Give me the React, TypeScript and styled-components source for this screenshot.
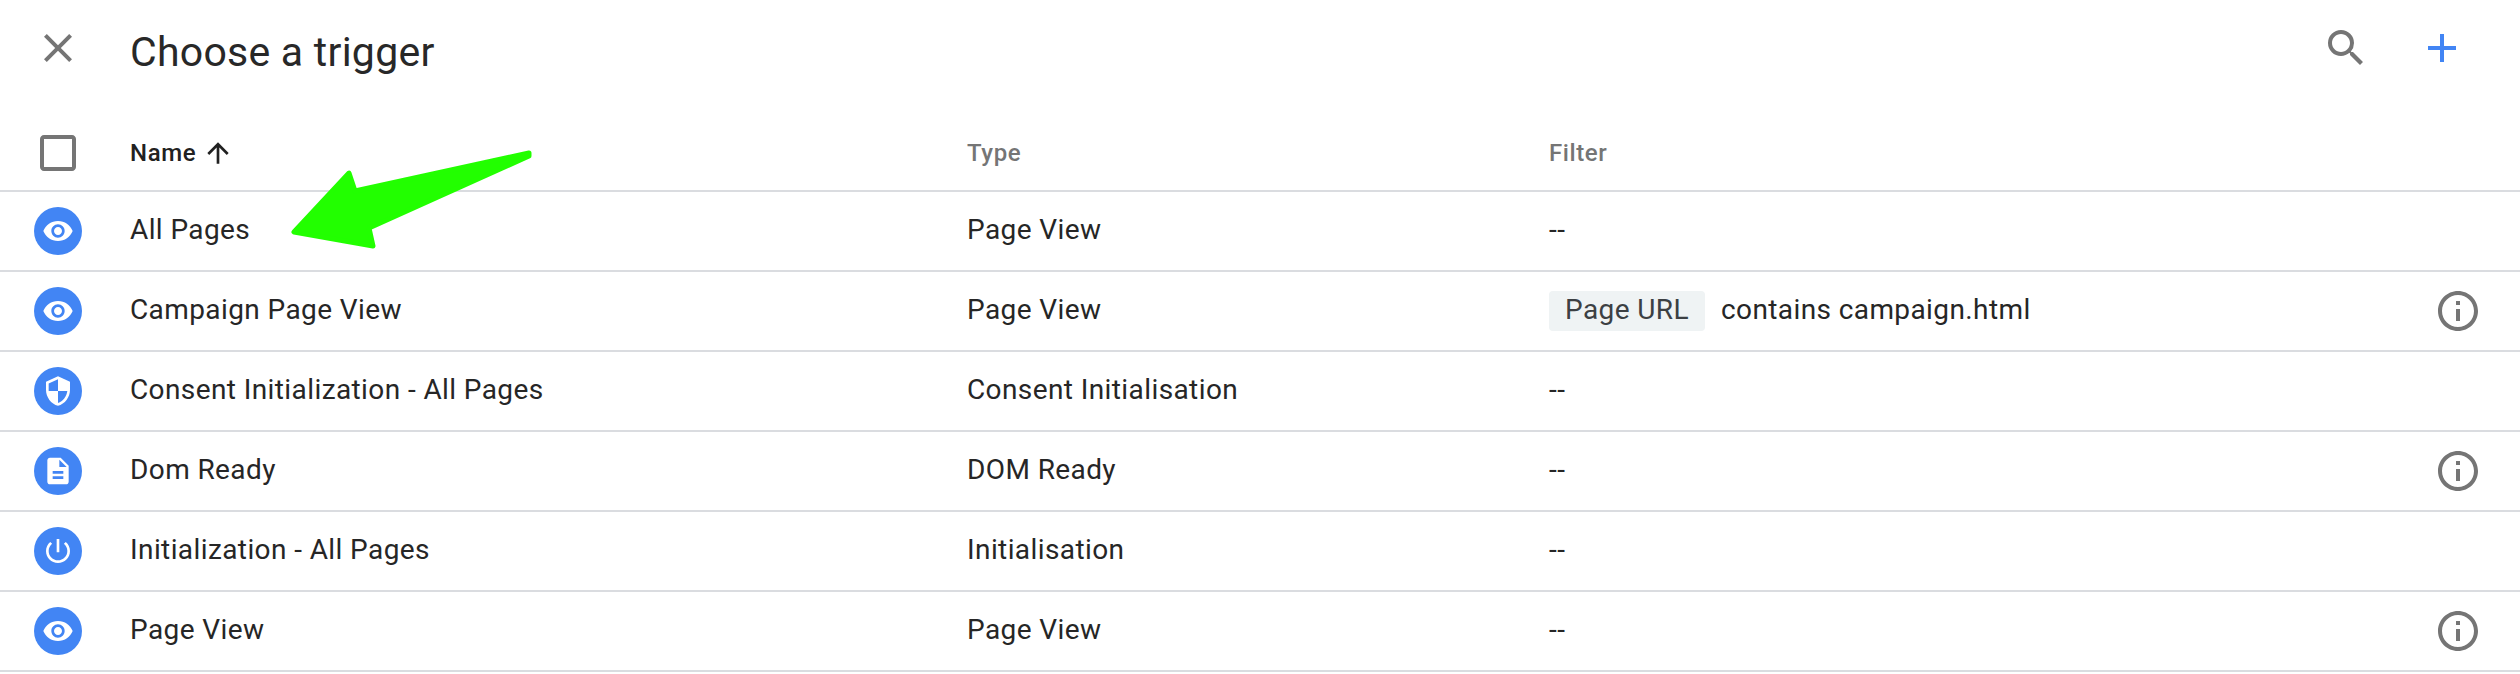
import styled, { createGlobalStyle } from "styled-components";

const GlobalStyle = createGlobalStyle`
  html, body {
    margin: 0;
    padding: 0;
    background: #fff;
  }
  body {
    font-family: Roboto, "Liberation Sans", sans-serif;
    color: #212121;
  }
`;

const Page = styled.div`
  position: relative;
  width: 2520px;
  height: 674px;
  overflow: hidden;
`;

const TopBar = styled.header`
  display: flex;
  align-items: center;
  height: 96px;
  padding: 0 54px 0 34px;
`;

const Title = styled.h1`
  flex: 1;
  margin: 8px 0 0 48px;
  font-size: 41px;
  font-weight: 400;
  line-height: 48px;
  letter-spacing: 0.25px;
  color: #282828;
`;

const Actions = styled.div`
  display: flex;
  gap: 48px;
`;

const Icon = styled.svg<{ $size?: number; $color?: string }>`
  display: block;
  flex: none;
  width: ${(p) => p.$size ?? 48}px;
  height: ${(p) => p.$size ?? 48}px;
  fill: ${(p) => p.$color ?? "#757575"};
`;

const Row = styled.div`
  display: grid;
  grid-template-columns: 130px 837px 582px 1fr 86px;
  align-items: center;
  height: 78px;
  border-bottom: 2px solid #dadce0;
  font-size: 28px;
  letter-spacing: 0.4px;
  color: #262626;
`;

const HeadRow = styled(Row)`
  height: 74px;
  padding-top: 20px;
  font-size: 24px;
  font-weight: 500;
  letter-spacing: 0.6px;
  color: #757575;
`;

const IconCell = styled.div`
  padding-left: 34px;
`;

const NameHead = styled.div`
  display: flex;
  align-items: center;
  gap: 6px;
  color: #212121;
`;

const Badge = styled.div`
  display: flex;
  align-items: center;
  justify-content: center;
  width: 48px;
  height: 48px;
  border-radius: 50%;
  background: #4285f4;
`;

const Cell = styled.div`
  padding-bottom: 4px;
`;

const Filter = styled.div`
  display: flex;
  align-items: center;
  gap: 16px;
`;

const Chip = styled.span`
  display: inline-flex;
  align-items: center;
  box-sizing: border-box;
  height: 40px;
  padding: 0 16px 4px;
  border-radius: 4px;
  background: #eff3f4;
  color: #3c4043;
`;

const Arrow = styled.svg`
  position: absolute;
  left: 0;
  top: 0;
  pointer-events: none;
`;

const eye =
  "M12 4.5C7 4.5 2.73 7.61 1 12c1.73 4.39 6 7.5 11 7.5s9.27-3.11 11-7.5c-1.73-4.39-6-7.5-11-7.5zM12 17c-2.76 0-5-2.24-5-5s2.24-5 5-5 5 2.24 5 5-2.24 5-5 5zm0-8c-1.66 0-3 1.34-3 3s1.34 3 3 3 3-1.34 3-3-1.34-3-3-3z";
const shield =
  "M12 1L3 5v6c0 5.55 3.84 10.74 9 12 5.16-1.26 9-6.45 9-12V5l-9-4zm0 10.99h7c-.53 4.12-3.28 7.79-7 8.94V12H5V6.3l7-3.11v8.8z";
const doc =
  "M14 2H6c-1.1 0-1.99.9-1.99 2L4 20c0 1.1.89 2 1.99 2H18c1.1 0 2-.9 2-2V8l-6-6zm2 16H8v-2h8v2zm0-4H8v-2h8v2zm-3-5V3.5L18.5 9H13z";
const power =
  "M13 3h-2v10h2V3zm4.83 2.17l-1.42 1.42C17.99 7.86 19 9.81 19 12c0 3.87-3.13 7-7 7s-7-3.13-7-7c0-2.19 1.01-4.14 2.58-5.42L6.17 5.17C4.23 6.82 3 9.26 3 12c0 4.97 4.03 9 9 9s9-4.03 9-9c0-2.74-1.23-5.18-3.17-6.83z";
const info =
  "M11 7h2v2h-2zm0 4h2v6h-2zm1-9C6.48 2 2 6.48 2 12s4.48 10 10 10 10-4.48 10-10S17.52 2 12 2zm0 18c-4.41 0-8-3.59-8-8s3.59-8 8-8 8 3.59 8 8-3.59 8-8 8z";

type Trigger = {
  name: string;
  type: string;
  icon: string;
  hasInfo?: boolean;
  chip?: string;
  filter?: string;
};

const triggers: Trigger[] = [
  { name: "All Pages", type: "Page View", icon: eye },
  {
    name: "Campaign Page View",
    type: "Page View",
    icon: eye,
    hasInfo: true,
    chip: "Page URL",
    filter: "contains campaign.html",
  },
  { name: "Consent Initialization - All Pages", type: "Consent Initialisation", icon: shield },
  { name: "Dom Ready", type: "DOM Ready", icon: doc, hasInfo: true },
  { name: "Initialization - All Pages", type: "Initialisation", icon: power },
  { name: "Page View", type: "Page View", icon: eye, hasInfo: true },
];

function Glyph({ d, size, color }: { d: string; size?: number; color?: string }) {
  return (
    <Icon viewBox="0 0 24 24" $size={size} $color={color}>
      <path d={d} />
    </Icon>
  );
}

export default function App() {
  return (
    <Page>
      <GlobalStyle />
      <TopBar>
        <Glyph d="M19 6.41L17.59 5 12 10.59 6.41 5 5 6.41 10.59 12 5 17.59 6.41 19 12 13.41 17.59 19 19 17.59 13.41 12z" />
        <Title>Choose a trigger</Title>
        <Actions>
          <Glyph d="M15.5 14h-.79l-.28-.27A6.471 6.471 0 0 0 16 9.5 6.5 6.5 0 1 0 9.5 16c1.61 0 3.09-.59 4.23-1.57l.27.28v.79l5 4.99L20.49 19l-4.99-5zm-6 0C7.01 14 5 11.99 5 9.5S7.01 5 9.5 5 14 7.01 14 9.5 11.99 14 9.5 14z" />
          <Glyph d="M19 13h-6v6h-2v-6H5v-2h6V5h2v6h6v2z" color="#4285f4" />
        </Actions>
      </TopBar>
      <HeadRow>
        <IconCell>
          <Glyph d="M19 5v14H5V5h14m0-2H5c-1.1 0-2 .9-2 2v14c0 1.1.9 2 2 2h14c1.1 0 2-.9 2-2V5c0-1.1-.9-2-2-2z" />
        </IconCell>
        <NameHead>
          Name
          <Glyph d="M4 12l1.41 1.41L11 7.83V20h2V7.83l5.58 5.59L20 12l-8-8-8 8z" size={32} color="#212121" />
        </NameHead>
        <div>Type</div>
        <div>Filter</div>
        <div />
      </HeadRow>
      {triggers.map((t) => (
        <Row key={t.name}>
          <IconCell>
            <Badge>
              <Glyph d={t.icon} size={32} color="#fff" />
            </Badge>
          </IconCell>
          <Cell>{t.name}</Cell>
          <Cell>{t.type}</Cell>
          <Filter>
            {t.chip ? <Chip>{t.chip}</Chip> : <Cell>--</Cell>}
            {t.filter && <Cell>{t.filter}</Cell>}
          </Filter>
          <div>{t.hasInfo && <Glyph d={info} />}</div>
        </Row>
      ))}
      <Arrow width="600" height="260" viewBox="0 0 600 260">
        <path
          d="M529 153 L355 191 L349 173 L294 232 L373 246 L369 228 L529 156 Z"
          fill="#22ff00"
          stroke="#22ff00"
          strokeWidth="5"
          strokeLinejoin="round"
        />
      </Arrow>
    </Page>
  );
}
